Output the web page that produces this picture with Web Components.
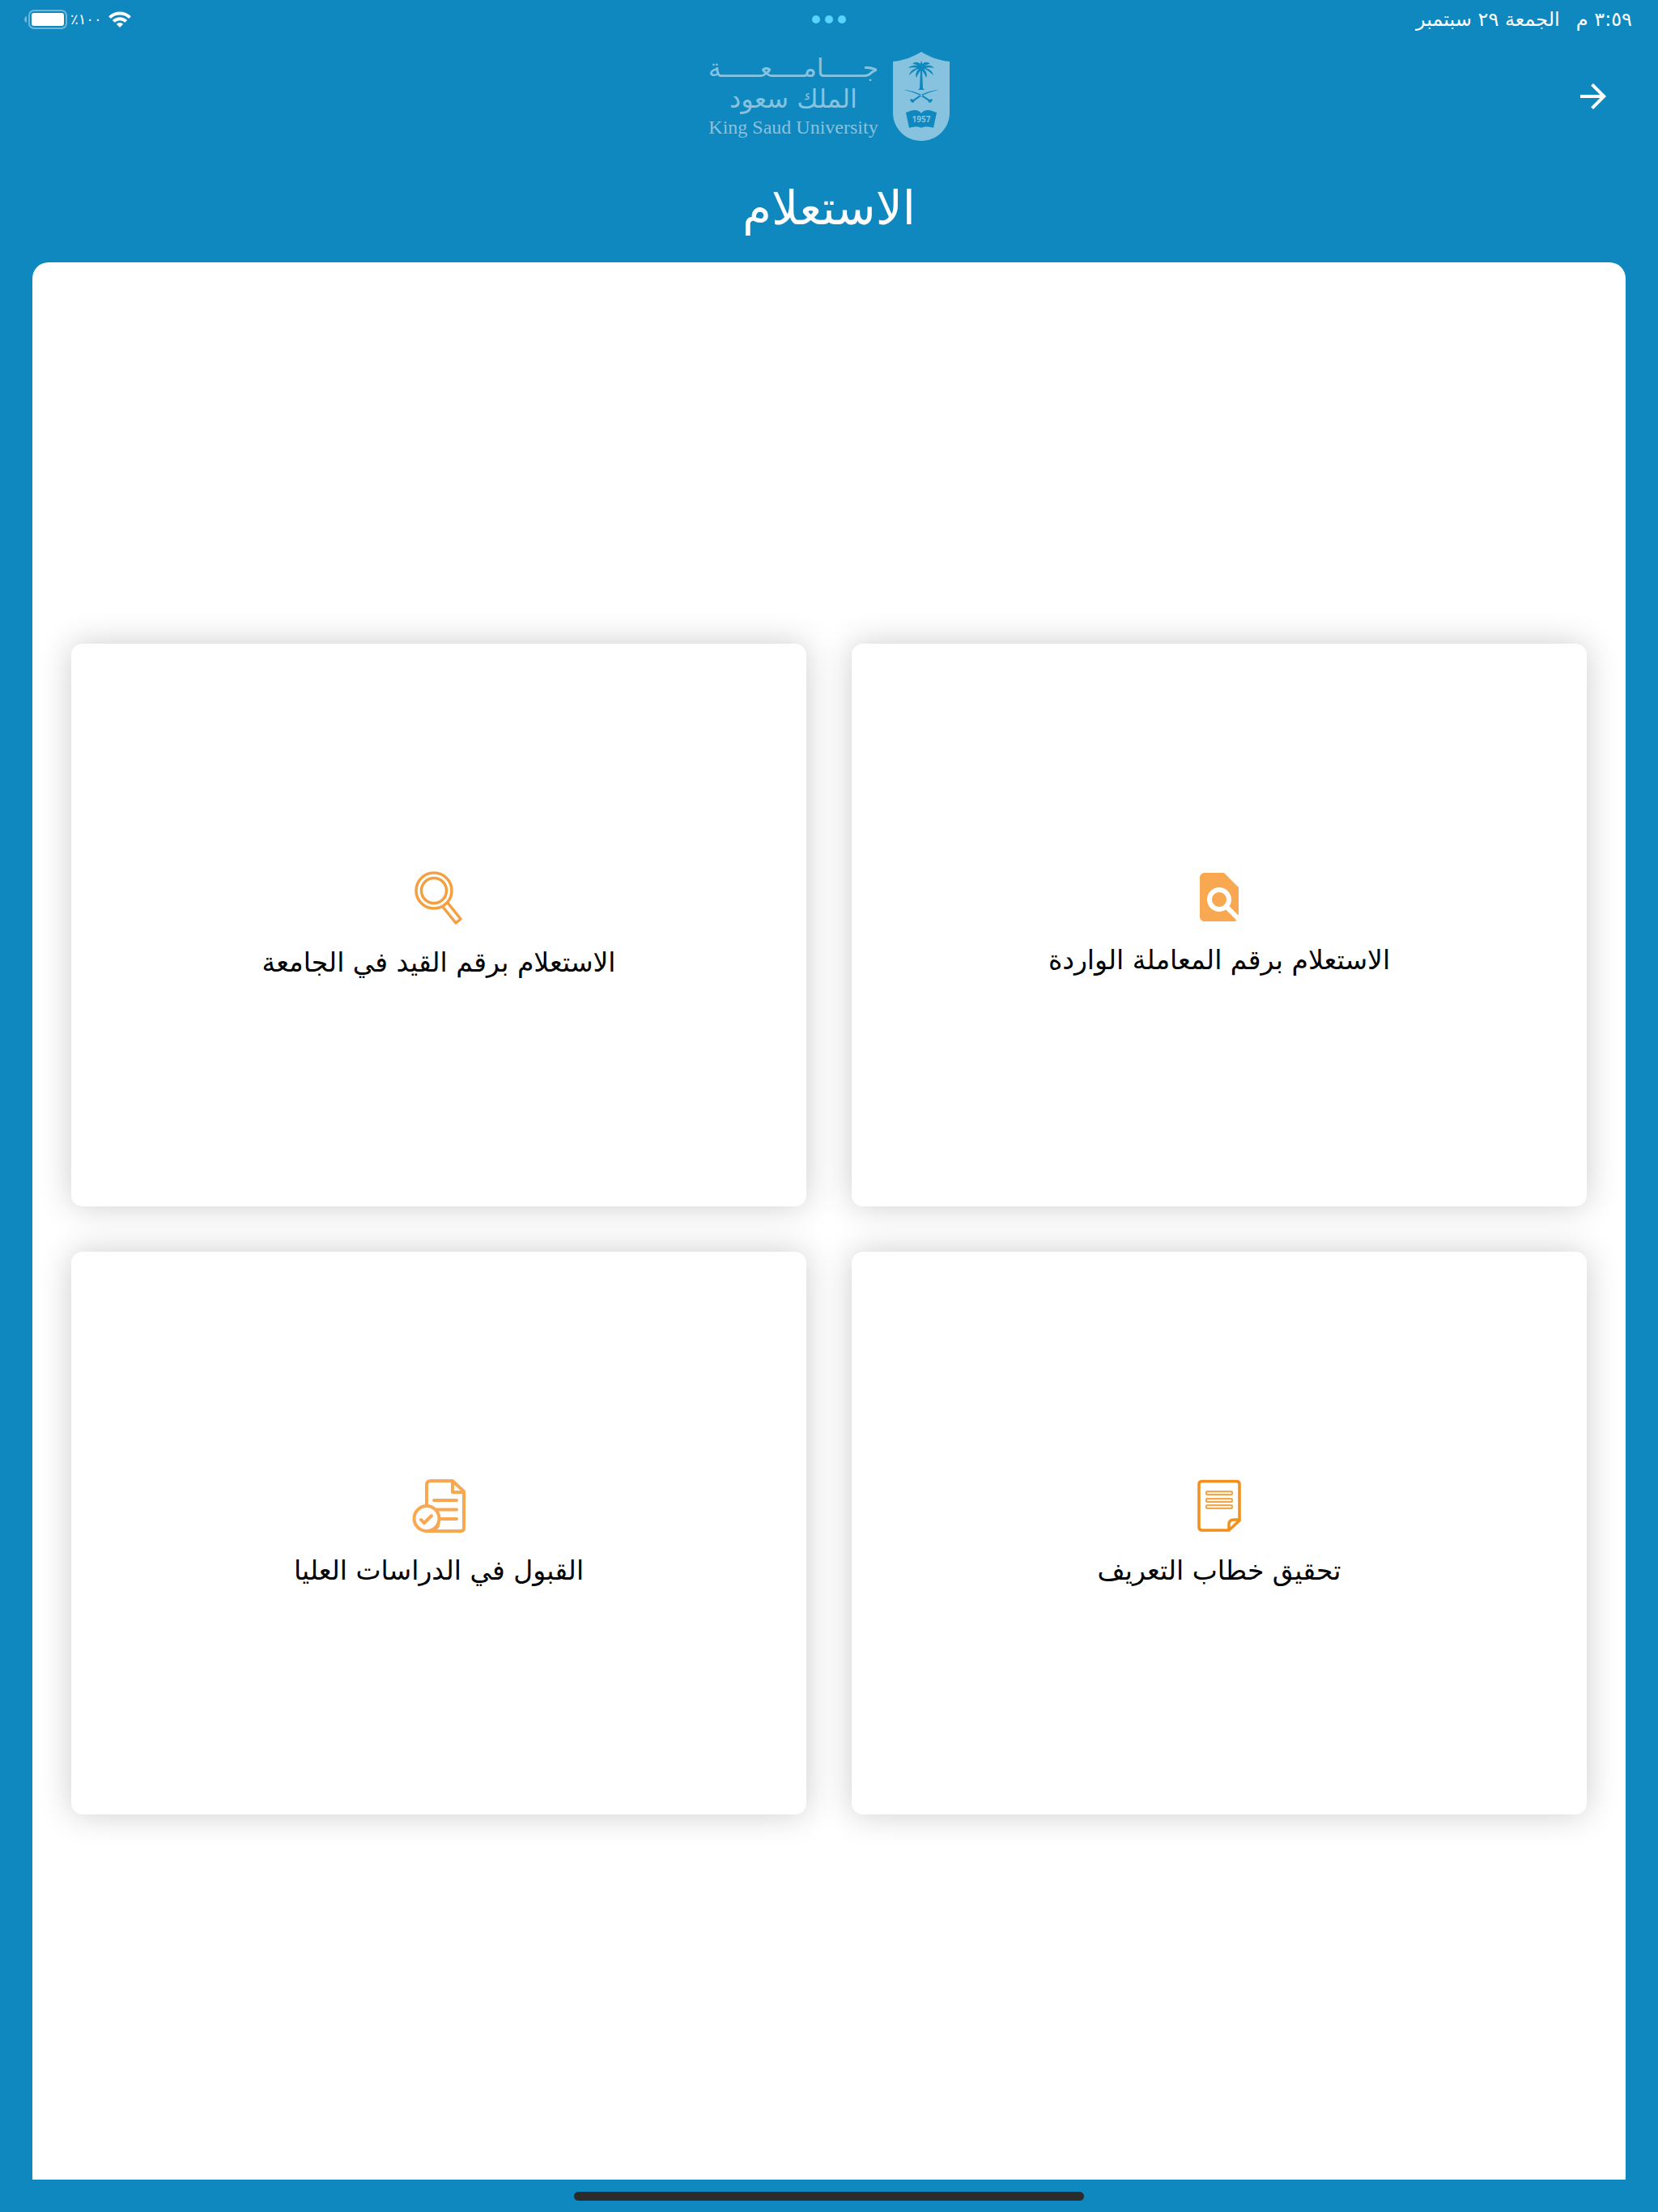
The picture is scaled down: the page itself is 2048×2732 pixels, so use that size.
<!DOCTYPE html>
<html lang="ar" dir="rtl">
<head>
<meta charset="utf-8">
<meta name="viewport" content="width=device-width, initial-scale=1">
<title>الاستعلام</title>
<style>
  body {
    margin: 0;
    background: #0f87bf;
    font-family: "DejaVu Sans", sans-serif;
  }
</style>
</head>
<body>
<inquiry-page>
  <status-bar slot="status" time="٣:٥٩ م" date="الجمعة ٢٩ سبتمبر" battery="١٠٠٪"></status-bar>
  <page-header slot="header">الاستعلام</page-header>
  <inquiry-card icon="find">الاستعلام برقم المعاملة الواردة</inquiry-card>
  <inquiry-card icon="magnifier">الاستعلام برقم القيد في الجامعة</inquiry-card>
  <inquiry-card icon="letter">تحقيق خطاب التعريف</inquiry-card>
  <inquiry-card icon="admission">القبول في الدراسات العليا</inquiry-card>
</inquiry-page>

<script>
class InquiryPage extends HTMLElement {
  constructor() {
    super();
    this.attachShadow({ mode: 'open' });
  }

  connectedCallback() {
    this.shadowRoot.innerHTML = `
      <style>
        :host {
          display: flex;
          flex-direction: column;
          min-height: 100vh;
        }
        main {
          flex: 1;
          display: grid;
          grid-template-columns: 1fr 1fr;
          gap: 56px;
          align-content: center;
          margin: 0 40px;
          padding: 20px 48px 0;
          background: #fff;
          border-radius: 20px 20px 0 0;
        }
        footer {
          display: flex;
          justify-content: center;
          align-items: center;
          height: 40px;
        }
        .home {
          width: 630px;
          max-width: 60%;
          height: 11px;
          border-radius: 6px;
          background: #2b2b2b;
        }
      </style>
      <slot name="status"></slot>
      <slot name="header"></slot>
      <main><slot></slot></main>
      <footer><div class="home"></div></footer>
    `;
  }
}
customElements.define('inquiry-page', InquiryPage);

class StatusBar extends HTMLElement {
  constructor() {
    super();
    this.attachShadow({ mode: 'open' });
  }

  connectedCallback() {
    this.shadowRoot.innerHTML = `
      <style>
        :host {
          display: grid;
          grid-template-columns: 1fr auto 1fr;
          align-items: center;
          height: 48px;
          padding: 0 30px;
          color: #fff;
          font-size: 24px;
          line-height: 28px;
        }
        svg { display: block; }
        .clock { display: flex; gap: 20px; padding-right: 2px; }
        .system { display: flex; justify-content: flex-end; align-items: center; font-size: 18px; }
        .wifi { margin-left: 8px; }
        .battery { margin-right: 4px; }
      </style>
      <div class="clock"><span>${this.getAttribute('time')}</span><span>${this.getAttribute('date')}</span></div>
      <svg width="42" height="10" viewBox="0 0 42 10" fill="#5ad2ff">
        <circle cx="5" cy="5" r="5"/><circle cx="21" cy="5" r="5"/><circle cx="37" cy="5" r="5"/>
      </svg>
      <div class="system">
        <svg class="wifi" width="28" height="20" viewBox="0 0 28 20" fill="none" stroke="#fff" stroke-width="4">
          <path d="M1.500 7.600A18 18 0 0 1 26.500 7.600M6.300 12.400A11 11 0 0 1 21.700 12.400"/>
          <path d="M14 20L9.800 15.700A6 6 0 0 1 18.200 15.700Z" fill="#fff" stroke="none"/>
        </svg>
        <span>${this.getAttribute('battery')}</span>
        <svg class="battery" width="53" height="24" viewBox="0 0 53 24">
          <rect x="6" y="1" width="46" height="22" rx="6" fill="none" stroke="#fff" stroke-opacity=".4" stroke-width="2"/>
          <rect x="9" y="4" width="40" height="16" rx="3" fill="#fff"/>
          <path d="M3 8C-1 9-1 15 3 16Z" fill="#fff" fill-opacity=".4"/>
        </svg>
      </div>
    `;
  }
}
customElements.define('status-bar', StatusBar);

class PageHeader extends HTMLElement {
  constructor() {
    super();
    this.attachShadow({ mode: 'open' });
  }

  connectedCallback() {
    this.shadowRoot.innerHTML = `
      <style>
        :host {
          display: block;
          color: #fff;
        }
        .bar {
          display: grid;
          grid-template-columns: 1fr auto 1fr;
          align-items: center;
          height: 142px;
          padding: 0 56px;
        }
        button {
          justify-self: start;
          width: 48px;
          height: 48px;
          padding: 0;
          border: 0;
          background: none;
          cursor: pointer;
        }
        button svg { display: block; }
        h1 {
          margin: 0;
          font-size: 58px;
          font-weight: 400;
          line-height: 134px;
          text-align: center;
        }
      </style>
      <div class="bar">
        <button type="button" aria-label="رجوع">
          <svg width="48" height="48" viewBox="0 0 24 24" fill="#fff"><path d="M12 4l-1.410 1.410L16.170 11H4v2h12.170l-5.580 5.590L12 20l8-8z"/></svg>
        </button>
        <ksu-logo></ksu-logo>
      </div>
      <h1><slot></slot></h1>
    `;
  }
}
customElements.define('page-header', PageHeader);

class KsuLogo extends HTMLElement {
  constructor() {
    super();
    this.attachShadow({ mode: 'open' });
  }

  connectedCallback() {
    this.shadowRoot.innerHTML = `
      <style>
        :host {
          display: flex;
          align-items: center;
          gap: 18px;
          color: #87c3df;
        }
        svg { display: block; }
        .name {
          display: flex;
          flex-direction: column;
          align-items: center;
          width: 210px;
          font-size: 32px;
          line-height: 38px;
          white-space: nowrap;
        }
        .en {
          font-family: "Liberation Serif", serif;
          font-size: 24px;
          line-height: 32px;
        }
      </style>
      <svg width="70" height="110" viewBox="0 0 70 110">
        <path fill="#87c3df" d="M35 0C45 6 57 11 70 12V75C70 95 54 110 35 110S0 95 0 75V12C13 11 25 6 35 0Z"/>
        <g fill="#0f87bf">
          <path d="M34 22H36L37 45L39 47H31L33 45Z"/>
          <path d="M35 11L36.500 15C39 12 43 12 46 15C43 15 41 16 39 17C44 16 49 17 51 20C47 19 43 19 40 20C45 21 49 24 50 29C46 25 42 22 38 21C41 24 43 28 41 32C39 27 37 24 35 22C33 24 31 27 29 32C27 28 29 24 32 21C28 22 24 25 20 29C21 24 25 21 30 20C27 19 23 19 19 20C21 17 26 16 31 17C29 16 27 15 24 15C27 12 31 12 33.500 15Z"/>
          <path d="M13 47C27 48 37 53 48 61L46 63C36 54 27 50 13 47ZM57 47C43 48 33 53 22 61L24 63C34 54 43 50 57 47Z"/>
          <path d="M43 60L48 58L49 60L45 63ZM27 60L22 58L21 60L25 63Z"/>
          <path d="M16 75L19 74C25 71 32 71 35 76C38 71 45 71 51 74L54 75L50 94C44 92 38 92 35 94C32 92 26 92 20 94Z"/>
        </g>
        <text x="35" y="87" text-anchor="middle" fill="#87c3df" direction="ltr" font-family="Open Sans, sans-serif" font-size="10" font-weight="700">1957</text>
      </svg>
      <div class="name">
        <span>جـــــامــــعـــــة</span>
        <span>الملك سعود</span>
        <span class="en" lang="en" dir="ltr">King Saud University</span>
      </div>
    `;
  }
}
customElements.define('ksu-logo', KsuLogo);

const cardIcons = {
  find: `
    <svg width="72" height="72" viewBox="0 0 24 24" fill="#f8a851">
      <path d="M20 19.590V8l-6-6H6c-1.100 0-1.990.900-1.990 2L4 20c0 1.100.890 2 1.990 2H18c.450 0 .850-.150 1.190-.400l-4.430-4.430c-.800.520-1.740.830-2.760.830-2.760 0-5-2.240-5-5s2.240-5 5-5 5 2.240 5 5c0 1.020-.310 1.960-.830 2.750L20 19.590zM9 13c0 1.660 1.340 3 3 3s3-1.340 3-3-1.340-3-3-3-3 1.340-3 3z"/>
    </svg>`,
  magnifier: `
    <svg width="78" height="78" viewBox="0 0 78 78" fill="none" stroke="#f4a040" stroke-width="3.500">
      <circle cx="33" cy="31" r="22"/>
      <circle cx="33" cy="31" r="15.500"/>
      <path d="M44 51L60 71L66 66L50 46" stroke-linejoin="round"/>
    </svg>`,
  letter: `
    <svg width="78" height="78" viewBox="0 0 78 78" fill="none" stroke="#f28f1d" stroke-width="3.500" stroke-linejoin="round">
      <path d="M51 70H18Q14 70 14 66V13Q14 9.500 18 9.500H60Q64 9.500 64 13V58L51 70V63Q51 57 57 57H64"/>
      <g stroke="#f4a64b" stroke-width="2" fill="#fdf0df">
        <rect x="23" y="22" width="32" height="4" rx="1"/>
        <rect x="23" y="31" width="32" height="4" rx="1"/>
        <rect x="23" y="39" width="32" height="4" rx="1"/>
      </g>
    </svg>`,
  admission: `
    <svg width="78" height="78" viewBox="0 0 78 78" fill="none" stroke="#f8a851" stroke-width="4" stroke-linecap="round" stroke-linejoin="round">
      <path d="M24 39V14Q24 9 29 9H56L70 22V67Q70 71 66 71H24M56 9V23H70"/>
      <path d="M33 33H61M36 44.500H61M42 56H61"/>
      <circle cx="24" cy="55.500" r="15.500"/>
      <path d="M17 57L21 61L30 52"/>
      <path d="M24 71Q32 72 38 65"/>
    </svg>`
};

class InquiryCard extends HTMLElement {
  constructor() {
    super();
    this.attachShadow({ mode: 'open' });
  }

  connectedCallback() {
    this.shadowRoot.innerHTML = `
      <style>
        :host { display: block; }
        button {
          display: flex;
          flex-direction: column;
          justify-content: center;
          align-items: center;
          gap: 12px;
          box-sizing: border-box;
          width: 100%;
          aspect-ratio: 908 / 695;
          padding: 2px 0 0;
          border: 0;
          border-radius: 14px;
          background: #fff;
          box-shadow: 0 0 40px rgba(0, 0, 0, .2);
          color: #000;
          font: 33px/60px "DejaVu Sans", sans-serif;
          cursor: pointer;
        }
        svg { display: block; }
      </style>
      <button type="button">${cardIcons[this.getAttribute('icon')]}<span><slot></slot></span></button>
    `;
  }
}
customElements.define('inquiry-card', InquiryCard);
</script>
</body>
</html>
